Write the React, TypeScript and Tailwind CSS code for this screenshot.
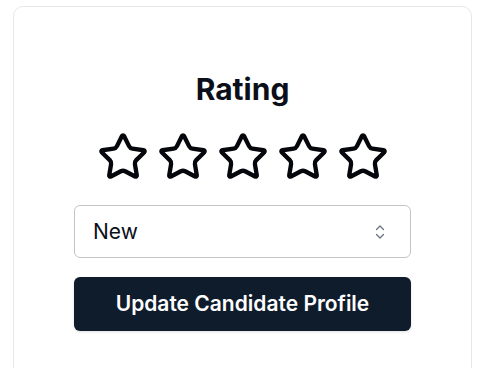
import React, { useState } from 'react'
import { Star } from 'lucide-react'

function UpDownIcon() {
  return (
    <svg width="10" height="16" viewBox="0 0 10 16" fill="none" stroke="#6b7280" strokeWidth="1.3" strokeLinecap="round" strokeLinejoin="round">
      <path d="M1.5 5.5 5 2l3.5 3.5" />
      <path d="M1.5 10.5 5 14l3.5-3.5" />
    </svg>
  )
}

export default function App() {
  const [rating, setRating] = useState(0)
  const [status] = useState('New')

  return (
    <div className="h-[368px] overflow-hidden bg-white pl-[13px] pt-[6px] font-['Inter','Liberation_Sans',sans-serif]">
      <div className="flex h-[420px] w-[459px] flex-col items-center rounded-[10px] border border-[#e8e8e8] bg-white pt-[62px]">
        <h2 className="text-[30px] leading-[40px] font-bold text-[#0b0f1a]">Rating</h2>
        <div className="mt-[22px] flex gap-[8px]">
          {[1, 2, 3, 4, 5].map((n) => (
            <button key={n} type="button" onClick={() => setRating(n)} className="p-0">
              <Star size={52} strokeWidth={2} color="#05070d" fill={n <= rating ? '#facc15' : 'none'} />
            </button>
          ))}
        </div>
        <div className="mt-[22px] flex h-[53px] w-[337px] items-center justify-between rounded-md border border-[#c4c4c8] bg-white pl-[18px] pr-[25px]">
          <span className="text-[21px] text-[#0b0f1a]">{status}</span>
          <UpDownIcon />
        </div>
        <button
          type="button"
          className="mt-[19px] h-[54px] w-[337px] rounded-md bg-[#0f1c2b] text-[21px] font-semibold text-white shadow-sm"
        >
          Update Candidate Profile
        </button>
      </div>
    </div>
  )
}
